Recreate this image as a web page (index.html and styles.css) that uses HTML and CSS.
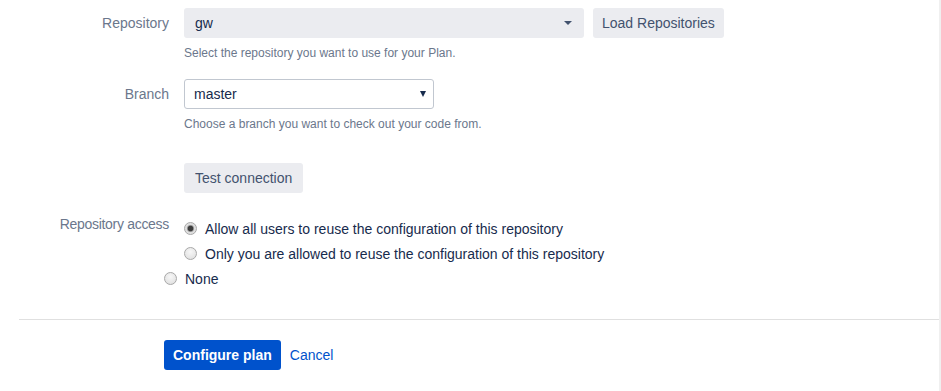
FILE: index.html
```html
<!DOCTYPE html>
<html lang="en">
<head>
    <meta charset="UTF-8">
    <meta name="viewport" content="width=device-width, initial-scale=1.0">
    <title>Configure plan</title>
    <link rel="stylesheet" href="styles.css">
</head>
<body>
    <div class="page">
        <form class="plan-form" onsubmit="return false;">
            <div class="field-group">
                <label class="field-label">Repository</label>
                <div class="field-body">
                    <div class="row">
                        <div class="select select-repo">
                            <span class="value">gw</span>
                            <span class="caret"></span>
                        </div>
                        <button type="button" class="btn btn-load">Load Repositories</button>
                    </div>
                    <div class="help">Select the repository you want to use for your Plan.</div>
                </div>
            </div>
            <div class="field-group">
                <label class="field-label">Branch</label>
                <div class="field-body">
                    <div class="select select-branch">
                        <span class="value">master</span>
                        <span class="caret dark"></span>
                    </div>
                    <div class="help">Choose a branch you want to check out your code from.</div>
                </div>
            </div>
            <div class="field-group test-group">
                <span></span>
                <div class="field-body">
                    <button type="button" class="btn">Test connection</button>
                </div>
            </div>
            <div class="field-group access-group">
                <label class="field-label small-label">Repository access</label>
                <div class="field-body radios">
                    <label class="radio"><input type="radio" name="access" checked> Allow all users to reuse the configuration of this repository</label>
                    <label class="radio"><input type="radio" name="access"> Only you are allowed to reuse the configuration of this repository</label>
                </div>
            </div>
            <label class="radio radio-none"><input type="radio" name="access"> None</label>
            <div class="buttons">
                <button type="submit" class="btn btn-primary">Configure plan</button>
                <a href="#" class="cancel">Cancel</a>
            </div>
        </form>
    </div>
</body>
</html>
```

FILE: styles.css
```css
body {
    margin: 0;
    font-family: "Liberation Sans", Arial, sans-serif;
    font-size: 14px;
    color: #172b4d;
    background: #fff;
    overflow: hidden;
}
.page {
    height: 391px;
    width: 941px;
    border-right: 2px solid #f0f0f0;
    box-sizing: border-box;
    overflow: hidden;
}

.field-group {
    display: grid;
    grid-template-columns: 150px 1fr;
    column-gap: 15px;
    padding-left: 19px;
    margin-top: 18px;
}
.field-group:first-child { margin-top: 8px; }
.field-label {
    text-align: right;
    color: #6b778c;
    line-height: 30px;
}
.row {
    display: flex;
    gap: 9px;
}
.select {
    position: relative;
    height: 30px;
    box-sizing: border-box;
    border-radius: 3px;
    display: flex;
    align-items: center;
}
.select-repo {
    width: 400px;
    background: #ebecf0;
    padding-left: 11px;
}
.select-branch {
    width: 250px;
    background: #fff;
    border: 1px solid #c1c7d0;
    padding-left: 9px;
}
.caret {
    position: absolute;
    right: 12px;
    top: 13px;
    border-left: 4px solid transparent;
    border-right: 4px solid transparent;
    border-top: 4px solid #42526e;
}
.caret.dark {
    right: 7px;
    top: 11px;
    border-left-width: 3.5px;
    border-right-width: 3.5px;
    border-top: 6px solid #172b4d;
}
.btn {
    font-family: inherit;
    font-size: 14px;
    height: 30px;
    padding: 0 11px;
    border: none;
    border-radius: 3px;
    background: #ebecf0;
    color: #42526e;
    cursor: pointer;
}
.btn-load { padding: 0 9px; }
.help {
    margin-top: 7px;
    font-size: 12px;
    line-height: 16px;
    color: #6b778c;
}
.test-group { margin-top: 31px; }
.access-group { margin-top: 21px; }
.small-label { line-height: 20px; letter-spacing: -0.3px; }
.radios { padding-top: 2px; }
.radio {
    display: flex;
    align-items: center;
    gap: 8px;
    height: 25px;
    color: #172b4d;
}
.radio input {
    appearance: none;
    -webkit-appearance: none;
    margin: 0;
    width: 13px;
    height: 13px;
    border-radius: 50%;
    border: 1px solid #a8a8a8;
    background: radial-gradient(circle at 50% 35%, #f7f7f7 0%, #dcdcdc 100%);
    box-sizing: border-box;
}
.radio input:checked {
    background: radial-gradient(circle, #3d3d3d 0 2.5px, #8c8c8c 3px, #dcdcdc 4px, #ececec 100%);
}
.radio-none {
    padding-left: 164px;
}
.buttons {
    border-top: 1px solid #e0e0e0;
    margin: 28px 0 0 19px;
    padding: 20px 0 0 145px;
    display: flex;
    align-items: center;
    gap: 9px;
}
.btn-primary {
    padding: 0 9px;
    background: #0052cc;
    color: #fff;
    font-weight: bold;
}
.cancel {
    color: #0052cc;
    text-decoration: none;
}
```
